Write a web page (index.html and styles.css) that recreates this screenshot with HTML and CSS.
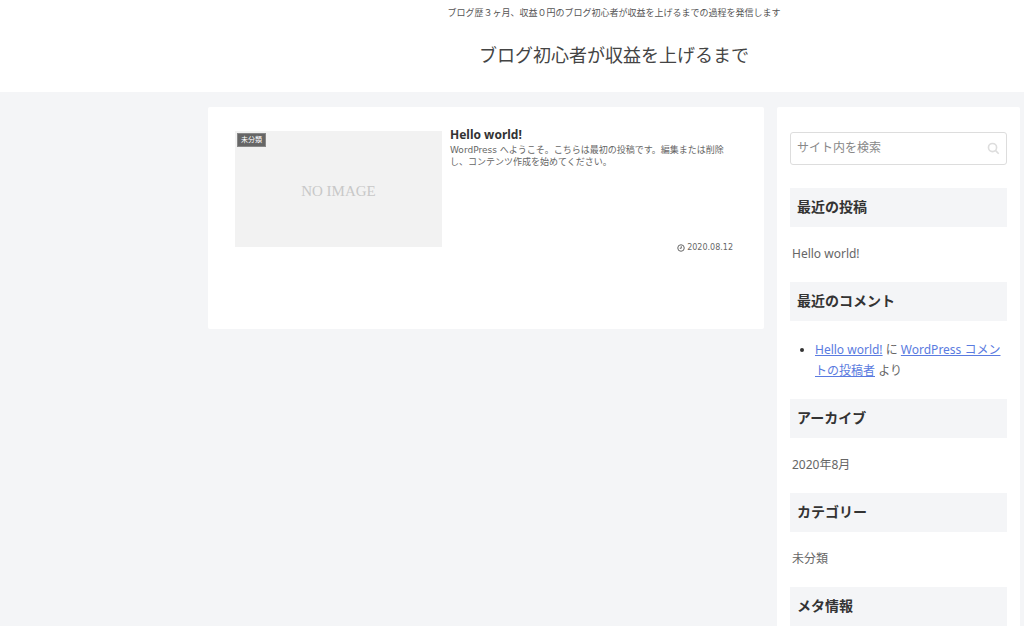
FILE: index.html
```html
<!DOCTYPE html>
<html lang="ja">
<head>
<meta charset="utf-8">
<meta name="viewport" content="width=device-width, initial-scale=1">
<title>ブログ初心者が収益を上げるまで</title>
<link rel="stylesheet" href="styles.css">
</head>
<body>
<header class="header">
  <p class="tagline">ブログ歴３ヶ月、収益０円のブログ初心者が収益を上げるまでの過程を発信します</p>
  <h1 class="site-name">ブログ初心者が収益を上げるまで</h1>
</header>
<div class="content">
  <main class="main">
    <article class="entry">
      <div class="thumb">
        <span class="no-image">NO IMAGE</span>
        <span class="cat-label">未分類</span>
      </div>
      <div class="entry-body">
        <h2 class="entry-title">Hello world!</h2>
        <p class="excerpt">WordPress へようこそ。こちらは最初の投稿です。編集または削除し、コンテンツ作成を始めてください。</p>
        <div class="entry-date">
          <svg class="clock" viewBox="0 0 16 16" aria-hidden="true"><circle cx="8" cy="8" r="6.5"/><path d="M8.5 4.5V8.5H5.5"/></svg>
          <time datetime="2020-08-12">2020.08.12</time>
        </div>
      </div>
    </article>
  </main>
  <aside class="sidebar">
    <form class="search">
      <input class="search-input" type="text" placeholder="サイト内を検索" aria-label="サイト内を検索">
      <button class="search-button" type="button" aria-label="検索"><svg class="magnifier" viewBox="0 0 16 16" aria-hidden="true"><circle cx="6.8" cy="6.8" r="5"/><path d="M10.6 10.6L14.4 14.4"/></svg></button>
    </form>
    <section class="widget">
      <h3 class="widget-title">最近の投稿</h3>
      <a class="widget-link" href="#">Hello world!</a>
    </section>
    <section class="widget">
      <h3 class="widget-title">最近のコメント</h3>
      <ul class="comments">
        <li><a class="comment-link" href="#">Hello world!</a> に <a class="comment-link" href="#">WordPress コメントの投稿者</a> より</li>
      </ul>
    </section>
    <section class="widget">
      <h3 class="widget-title">アーカイブ</h3>
      <a class="widget-link" href="#">2020年8月</a>
    </section>
    <section class="widget">
      <h3 class="widget-title">カテゴリー</h3>
      <a class="widget-link" href="#">未分類</a>
    </section>
    <section class="widget">
      <h3 class="widget-title">メタ情報</h3>
    </section>
  </aside>
</div>
</body>
</html>
```
FILE: styles.css
```css
* {
  box-sizing: border-box;
}

html {
  height: 100%;
  overflow: hidden;
}

body {
  margin: 0;
  height: 100%;
  overflow: hidden;
  background: #f4f5f7;
  color: #666;
  font-family: "Noto Sans", "Noto Sans CJK JP", sans-serif;
  font-size: 12px;
  line-height: 20px;
}

h1, h2, h3, p, ul {
  margin: 0;
  padding: 0;
}

.header {
  background: #fff;
  padding: 6px 0 22px 204px;
  text-align: center;
}

.tagline {
  color: #555;
  font-size: 9px;
  line-height: 14px;
}

.site-name {
  margin-top: 20px;
  color: #444;
  font-size: 18px;
  font-weight: 400;
  line-height: 30px;
}

.content {
  display: flex;
  align-items: flex-start;
  gap: 13px;
  padding: 15px 4px 0 208px;
}

.main {
  flex: 1;
  min-height: 222px;
  padding: 20px 27px 24px;
  background: #fff;
  border-radius: 2px;
}

.entry {
  display: flex;
  align-items: flex-start;
  gap: 8px;
}

.thumb {
  position: relative;
  display: flex;
  align-items: center;
  justify-content: center;
  width: 207px;
  height: 116px;
  margin-top: 4px;
  background: #f2f2f2;
}

.no-image {
  padding-top: 4px;
  color: #c8c8c8;
  font-family: "Liberation Serif", serif;
  font-size: 15px;
}

.cat-label {
  position: absolute;
  top: 2px;
  left: 2px;
  padding: 0 3px;
  border: 1px solid #888;
  background: #666;
  color: #fff;
  font-size: 7px;
  line-height: 12px;
}

.entry-body {
  display: flex;
  flex: 1;
  flex-direction: column;
  min-height: 127px;
}

.entry-title {
  color: #333;
  font-size: 12px;
  line-height: 16px;
}

.excerpt {
  margin-top: 1px;
  font-family: "DejaVu Sans", "Noto Sans CJK JP", sans-serif;
  font-size: 9px;
  line-height: 12px;
}

.entry-date {
  display: flex;
  align-items: center;
  justify-content: flex-end;
  gap: 2px;
  margin-top: auto;
  padding-right: 4px;
  font-family: "DejaVu Sans", sans-serif;
  font-size: 8px;
  line-height: 12px;
}

.clock,
.magnifier {
  fill: none;
  stroke: currentColor;
  stroke-width: 2;
}

.clock {
  width: 8px;
  height: 8px;
}

.sidebar {
  width: 243px;
  padding: 25px 13px 27px;
  background: #fff;
  border-radius: 2px;
}

.search {
  display: flex;
  height: 33px;
  border: 1px solid #ddd;
  border-radius: 3px;
}

.search-input {
  flex: 1;
  min-width: 0;
  padding: 0 6px 2px;
  border: 0;
  background: none;
  font: inherit;
}

.search-input::placeholder {
  color: #888;
}

.search-button {
  display: flex;
  align-items: center;
  padding: 0 6px;
  border: 0;
  background: none;
  color: #ddd;
}

.magnifier {
  width: 13px;
  height: 13px;
}

.widget {
  margin-top: 23px;
}

.widget-title {
  margin-bottom: 17px;
  padding: 9px 7px 10px;
  background: #f4f5f7;
  color: #333;
  font-size: 14px;
  line-height: 20px;
}

.widget-link {
  display: block;
  padding: 0 2px;
  margin-bottom: -5px;
  color: #666;
  text-decoration: none;
}

.comments {
  margin-bottom: -5px;
  padding: 1px 0 0 25px;
  line-height: 21px;
}

.comments li::marker {
  color: #333;
}

.comment-link {
  color: #5a7be0;
}
```
